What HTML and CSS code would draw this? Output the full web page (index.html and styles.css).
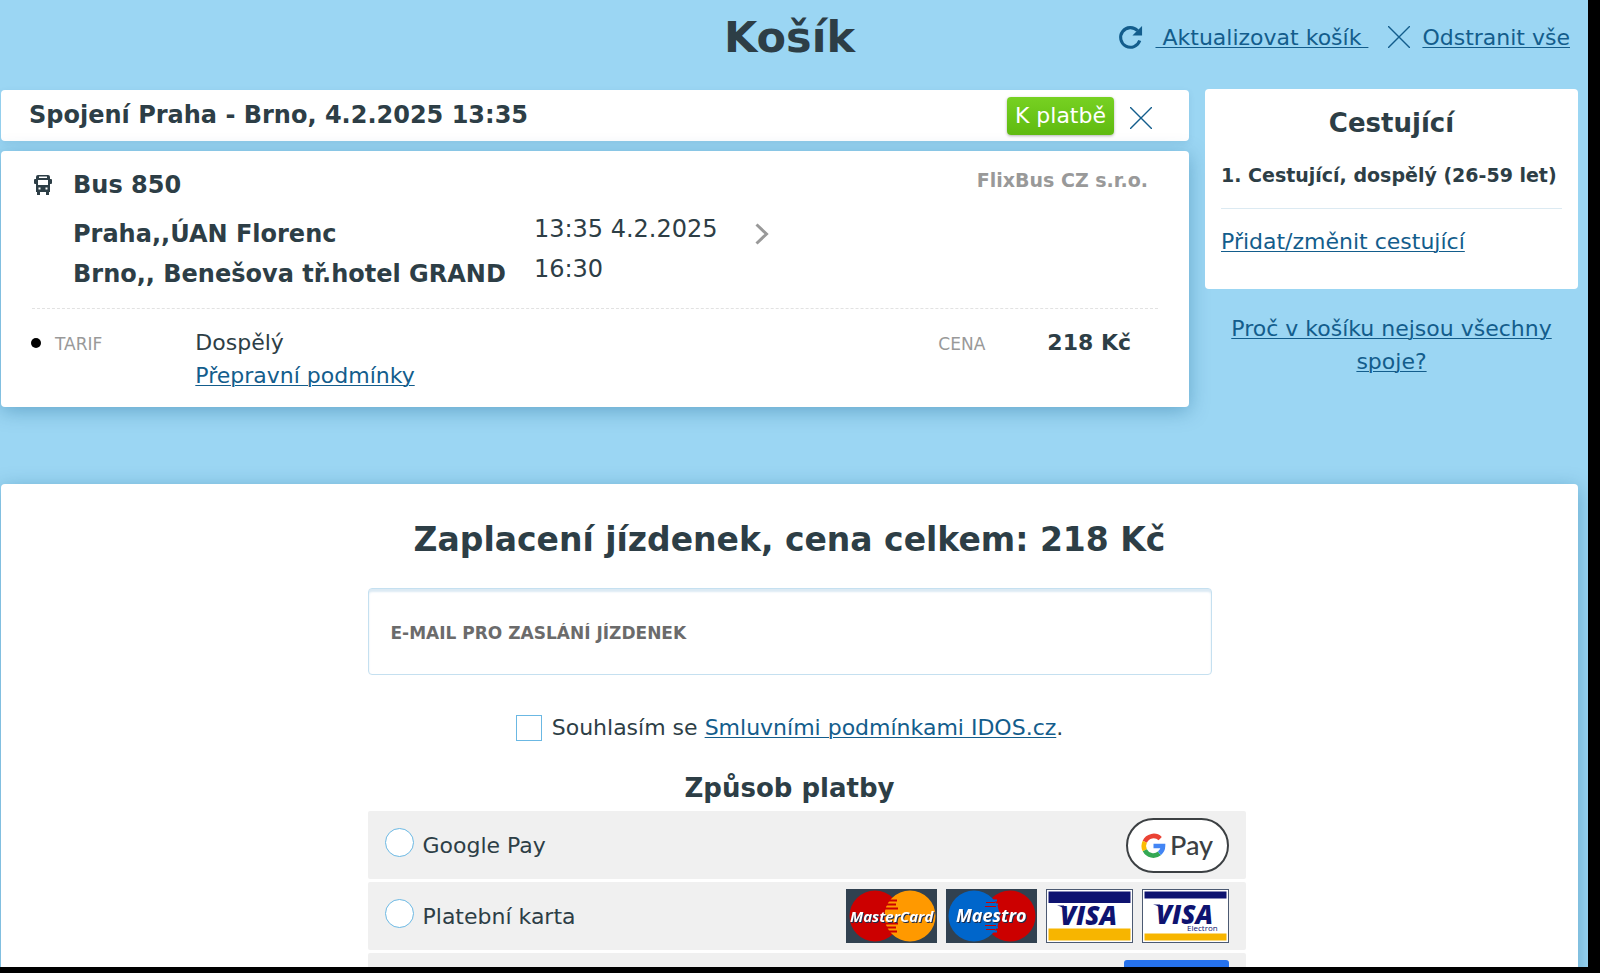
FILE: index.html
```html
<!DOCTYPE html>
<html lang="cs">
<head>
    <meta charset="UTF-8">
    <meta name="viewport" content="width=device-width, initial-scale=1.0">
    <title>Košík</title>
    <link rel="stylesheet" href="styles.css">
</head>
<body>
    <div class="page">
        <header class="basket-header">
            <h1>Košík</h1>
            <div class="basket-actions">
                <svg class="icon-reload" viewBox="0 0 26 26" aria-hidden="true">
                    <path d="M22.6 16.2A10.2 10.2 0 1 1 20.4 6" fill="none" stroke="#135d8c" stroke-width="3.2"/>
                    <path d="M25 1v10H15z" fill="#135d8c"/>
                </svg>
                <a href="#" class="reload">&nbsp;Aktualizovat košík&nbsp;</a>
                <svg class="icon-cross" viewBox="0 0 22 22" aria-hidden="true">
                    <path d="M0 0l22 22M22 0L0 22" stroke="#135d8c" stroke-width="1.4"/>
                </svg>
                <a href="#">Odstranit vše</a>
            </div>
        </header>

        <div class="columns">
            <main class="connections">
                <div class="connection-title">
                    <h2>Spojení Praha - Brno, 4.2.2025 13:35</h2>
                    <span class="badge">K platbě</span>
                    <button type="button" class="remove" aria-label="Odstranit">
                        <svg class="icon-cross" viewBox="0 0 22 22">
                            <path d="M0 0l22 22M22 0L0 22" stroke="#135d8c" stroke-width="1.4"/>
                        </svg>
                    </button>
                </div>

                <div class="card connection">
                    <div class="line-head">
                        <svg class="icon-bus" viewBox="0 0 18 20" aria-hidden="true">
                            <path fill="#2d3e46" fill-rule="evenodd" d="M4 0h10q2 0 2 2v2h1q1 0 1 1v3q0 1-1 1h-1v8h-1v3h-3v-3H6v3H3v-3H2V9H1Q0 9 0 8V5q0-1 1-1h1V2q0-2 2-2zM5 1.500h8V3H5zM4 5h10v5H4zM4.500 12.500h2v2h-2zM11.500 12.500h2v2h-2z"/>
                        </svg>
                        <h3>Bus 850</h3>
                        <span class="carrier">FlixBus CZ s.r.o.</span>
                    </div>
                    <div class="route">
                        <div class="stations">
                            <p>Praha,,ÚAN Florenc</p>
                            <p>Brno,, Benešova tř.hotel GRAND</p>
                        </div>
                        <div class="times">
                            <p>13:35 4.2.2025</p>
                            <p>16:30</p>
                        </div>
                        <svg class="icon-chevron" viewBox="0 0 14 22" aria-hidden="true">
                            <path d="M1.500 1.500l10 9.500-10 9.500" fill="none" stroke="#999" stroke-width="3"/>
                        </svg>
                    </div>
                    <div class="fare">
                        <span class="bullet"></span>
                        <span class="label">TARIF</span>
                        <div class="fare-name">
                            <p>Dospělý</p>
                            <a href="#">Přepravní podmínky</a>
                        </div>
                        <span class="label">CENA</span>
                        <strong class="price">218 Kč</strong>
                    </div>
                </div>
            </main>

            <aside class="sidebar">
                <div class="passengers">
                    <h2>Cestující</h2>
                    <p>1. Cestující, dospělý (26-59 let)</p>
                    <a href="#">Přidat/změnit cestující</a>
                </div>
                <a href="#" class="why">Proč v košíku nejsou všechny spoje?</a>
            </aside>
        </div>

        <section class="card payment">
            <form class="payment-form">
                <h2>Zaplacení jízdenek, cena celkem: 218 Kč</h2>
                <input type="email" class="email" aria-label="E-mail pro zaslání jízdenek" placeholder="E-MAIL PRO ZASLÁNÍ JÍZDENEK">
                <div class="agree">
                    <input type="checkbox" id="agree">
                    <label for="agree">Souhlasím se <a href="#">Smluvními podmínkami IDOS.cz</a>.</label>
                </div>
                <h3>Způsob platby</h3>
                <ul class="methods">
                    <li>
                        <input type="radio" name="method" id="gpay">
                        <label for="gpay">Google Pay</label>
                        <svg class="logo-gpay" viewBox="0 0 103 55" aria-hidden="true">
                            <rect x="1" y="1" width="101" height="53" rx="26.500" fill="#fff" stroke="#3c4043" stroke-width="2"/>
                            <g fill="none" stroke-width="4.600">
                                <path d="M34.200 20.600A9.600 9.600 0 0 0 18.800 23.700" stroke="#ea4335"/>
                                <path d="M18.800 23.700A9.600 9.600 0 0 0 18.800 32.300" stroke="#fbbc04"/>
                                <path d="M18.800 32.300A9.600 9.600 0 0 0 33.400 35.400" stroke="#34a853"/>
                                <path d="M33.400 35.400A9.600 9.600 0 0 0 37 28H27.500" stroke="#4285f4"/>
                            </g>
                            <text x="44" y="37" class="gpay-text">Pay</text>
                        </svg>
                    </li>
                    <li>
                        <input type="radio" name="method" id="card">
                        <label for="card">Platební karta</label>
                        <svg class="logo-wide" viewBox="0 0 91 54" aria-hidden="true">
                            <rect width="91" height="54" fill="#314150"/>
                            <circle cx="29" cy="27" r="25.500" fill="#c00"/>
                            <circle cx="64" cy="27" r="25.500" fill="#f90"/>
                            <path d="M43 11.500h8M40 15.500h10M39 19.500h13M39 34.500h13M40 38.500h10M43 42.500h8" stroke="#c00" stroke-width="2"/>
                            <text x="4" y="33" class="brand">MasterCard</text>
                        </svg>
                        <svg class="logo-wide" viewBox="0 0 91 54" aria-hidden="true">
                            <rect width="91" height="54" fill="#314150"/>
                            <circle cx="64" cy="27" r="25.500" fill="#c00"/>
                            <circle cx="28" cy="27" r="25.500" fill="#0066cb"/>
                            <path d="M43 11.500h8M40 15.500h12M39 19.500h13M39 34.500h13M40 38.500h12M43 42.500h8" stroke="#0066cb" stroke-width="2"/>
                            <path d="M40 13.500h9M39 17.500h11M39 36.500h11M40 40.500h9" stroke="#c00" stroke-width="1"/>
                            <text x="10" y="33" class="brand maestro">Maestro</text>
                        </svg>
                        <svg class="logo-visa" viewBox="0 0 87 54" aria-hidden="true">
                            <rect x=".5" y=".5" width="86" height="53" fill="#fff" stroke="#4c5a72"/>
                            <rect x="2.500" y="2.500" width="82" height="11.500" fill="#0e1370"/>
                            <rect x="2.500" y="39.500" width="82" height="12" fill="#f7b500"/>
                            <text x="14" y="36" class="visa">VISA</text>
                            <path d="M11 16.500h7l2 6q-3-5-9-6z" fill="#0e1370"/>
                        </svg>
                        <svg class="logo-visa" viewBox="0 0 87 54" aria-hidden="true">
                            <rect x=".5" y=".5" width="86" height="53" fill="#fff" stroke="#4c5a72"/>
                            <rect x="2.500" y="2.500" width="82" height="7" fill="#0e1370"/>
                            <rect x="2.500" y="44.500" width="82" height="7" fill="#f7b500"/>
                            <text x="14" y="35" class="visa">VISA<tspan x="45" y="42" class="electron">Electron</tspan></text>
                            <path d="M11 15.500h7l2 6q-3-5-9-6z" fill="#0e1370"/>
                        </svg>
                    </li>
                    <li>
                        <span class="logo-blue"></span>
                    </li>
                </ul>
            </form>
        </section>
    </div>
</body>
</html>
```

FILE: styles.css
```css
* {
    box-sizing: border-box;
}
html,
body {
    height: 100%;
    margin: 0;
}
body {
    background: #000;
    padding: 0 12px 6px 0;
    overflow: hidden;
    font-family: "DejaVu Sans", sans-serif;
    font-size: 22px;
    line-height: 33px;
    color: #2d3e46;
}
h1, h2, h3, p, ul {
    margin: 0;
    padding: 0;
}
a {
    color: #135d8c;
    text-decoration-thickness: 1px;
    text-underline-offset: 2px;
}
svg {
    flex: none;
    display: block;
}
.page {
    height: 100%;
    overflow: hidden;
    background: #9bd6f3;
    padding: 0 10px 0 1px;
}

/* header */
.basket-header {
    display: grid;
    grid-template-columns: 1fr auto 1fr;
    align-items: center;
    height: 74px;
    margin-bottom: 16px;
}
.basket-header h1 {
    grid-column: 2;
    font-size: 43px;
    line-height: 74px;
}
.basket-actions {
    display: flex;
    justify-content: flex-end;
    align-items: center;
    padding-right: 8px;
}
.icon-reload {
    width: 25px;
    height: 25px;
}
.icon-cross {
    width: 22px;
    height: 22px;
}
.basket-actions a {
    margin-left: 12px;
}
.basket-actions .reload {
    margin-right: 20px;
}

/* basket content */
.columns {
    display: grid;
    grid-template-columns: minmax(0, 1fr) 373px;
    gap: 16px;
    margin-bottom: 77px;
}
.connection-title {
    display: flex;
    align-items: center;
    height: 51px;
    margin-bottom: 10px;
    padding: 0 37px 0 28px;
    background: #fff;
    border-radius: 4px;
    box-shadow: 0 2px 6px rgba(0, 80, 130, .1);
}
.connection-title h2 {
    font-size: 24px;
    margin-right: auto;
}
.badge {
    padding: 2px 8px 3px;
    border-radius: 4px;
    background: linear-gradient(#77d122, #5fba10);
    box-shadow: 0 1px 3px rgba(0, 0, 0, .3);
    color: #fff;
}
.remove {
    margin-left: 16px;
    padding: 4px 0 0;
    border: 0;
    background: none;
    cursor: pointer;
}
.card {
    background: #fff;
    border-radius: 4px;
    box-shadow: 0 4px 20px rgba(0, 80, 130, .35);
}
.connection {
    padding: 16px 31px 15px;
}
.line-head {
    display: flex;
    align-items: center;
    height: 36px;
    padding-left: 2px;
}
.icon-bus {
    width: 18px;
    height: 20px;
    margin-right: 21px;
}
.line-head h3,
.stations {
    font-size: 24px;
    font-weight: bold;
}
.carrier {
    align-self: flex-start;
    margin: -3px 10px 0 auto;
    font-size: 19px;
    font-weight: bold;
    color: #999;
}
.route {
    display: flex;
    padding: 6px 0 14px 41px;
    border-bottom: 1px dashed #e2e2e2;
    line-height: 40px;
}
.stations {
    padding-top: 5px;
}
.times {
    margin: 0 37px 0 28px;
    font-size: 24px;
}
.icon-chevron {
    width: 14px;
    height: 22px;
    margin-top: 14px;
}
.fare {
    display: flex;
    align-items: flex-start;
    padding: 17px 27px 0 0;
}
.bullet {
    width: 10px;
    height: 10px;
    margin: 12px 14px 0 -1px;
    border-radius: 50%;
    background: #000;
}
.label {
    font-size: 17px;
    line-height: 36px;
    color: #999;
}
.fare-name {
    margin: 0 auto 0 93px;
}
.price {
    margin-left: 62px;
}

/* sidebar */
.sidebar {
    text-align: center;
}
.passengers {
    margin: -1px 0 23px;
    padding: 16px 16px 31px;
    background: #fff;
    border-radius: 4px;
    text-align: left;
}
.passengers h2 {
    font-size: 26px;
    line-height: 36px;
    text-align: center;
}
.passengers p {
    margin-bottom: 16px;
    padding: 18px 0 16px;
    border-bottom: 1px solid #dceaf2;
    font-size: 19px;
    font-weight: bold;
}
.why {
    display: block;
    padding: 0 16px;
}

/* payment */
.payment {
    padding: 34px 16px 0;
}
.payment-form {
    max-width: 844px;
    margin: 0 auto;
    text-align: center;
}
.payment-form h2 {
    margin-bottom: 26px;
    font-size: 33px;
    line-height: 44px;
    white-space: nowrap;
}
.email {
    display: block;
    width: 100%;
    height: 87px;
    padding: 3px 22px 0;
    border: 1px solid #c5e0f0;
    border-radius: 4px;
    box-shadow: inset 0 3px 2px #dceaf4;
    font: bold 17px "DejaVu Sans", sans-serif;
    color: #2d3e46;
}
.email::placeholder {
    color: #6b6b6b;
}
.agree {
    display: flex;
    justify-content: center;
    align-items: center;
    margin: 36px 0 26px;
}
.agree input,
.methods input {
    appearance: none;
    flex: none;
    margin: 0;
    border: 1px solid #6bb8e3;
    background: #fff;
}
.agree input {
    width: 26px;
    height: 26px;
    margin-right: 10px;
}
.payment-form h3 {
    font-size: 26px;
    line-height: 36px;
    margin-bottom: 5px;
}
.methods {
    list-style: none;
    margin-right: -34px;
}
.methods li {
    display: flex;
    align-items: center;
    gap: 9px;
    min-height: 68px;
    margin-bottom: 3px;
    padding: 6px 17px;
    background: #f0f0f0;
    border-radius: 2px;
}
.methods input {
    width: 29px;
    height: 29px;
    margin-bottom: 6px;
    border-radius: 50%;
}
.methods label {
    margin-right: auto;
}
.logo-gpay {
    width: 103px;
    height: 55px;
}
.gpay-text {
    font: 500 27px Lato, sans-serif;
    fill: #3c4043;
}
.logo-wide {
    width: 91px;
    height: 54px;
}
.logo-visa {
    width: 87px;
    height: 54px;
}
.brand {
    font: italic bold 15px "Open Sans", sans-serif;
    fill: #fff;
    filter: drop-shadow(1px 1px 0 #1c2b4a);
}
.maestro {
    font-size: 18px;
}
.visa {
    font: italic 800 26px "Open Sans", sans-serif;
    fill: #0e1370;
}
.electron {
    font: 8px "Open Sans", sans-serif;
}
.logo-blue {
    width: 105px;
    height: 54px;
    margin-left: auto;
    border-radius: 3px;
    background: #2672ec;
}
```
